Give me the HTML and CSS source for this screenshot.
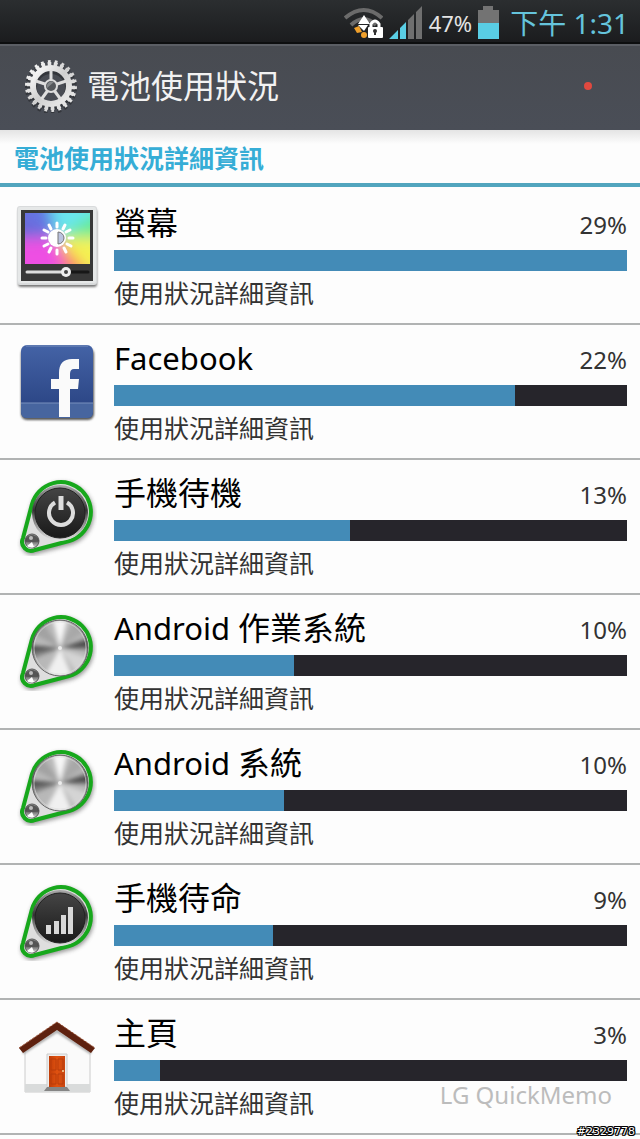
FILE: index.html
```html
<!DOCTYPE html>
<html lang="zh-Hant">
<head>
<meta charset="utf-8">
<meta name="viewport" content="width=device-width, initial-scale=1">
<title>電池使用狀況</title>
<link rel="stylesheet" href="styles.css">
</head>
<body>
<svg class="defs" width="0" height="0" aria-hidden="true">
  <defs>
    <linearGradient id="silver" x1="0" y1="0" x2="1" y2="1"><stop offset="0" stop-color="#fff"/><stop offset=".5" stop-color="#cfcfcf"/><stop offset="1" stop-color="#eee"/></linearGradient>
    <linearGradient id="rim" x1="0" y1="0" x2="0" y2="1"><stop offset="0" stop-color="#aaa"/><stop offset=".45" stop-color="#333"/><stop offset=".6" stop-color="#777"/><stop offset="1" stop-color="#e4e4e4"/></linearGradient>
    <linearGradient id="black" x1="0" y1="0" x2="0" y2="1"><stop offset="0" stop-color="#454545"/><stop offset="1" stop-color="#191919"/></linearGradient>
    <linearGradient id="fb" x1="0" y1="0" x2="0" y2="1"><stop offset="0" stop-color="#4463a6"/><stop offset="1" stop-color="#27407f"/></linearGradient>
    <linearGradient id="door" x1="0" y1="0" x2="1" y2="0"><stop offset="0" stop-color="#c03c08"/><stop offset=".5" stop-color="#e05210"/><stop offset="1" stop-color="#c84510"/></linearGradient>
    <filter id="blur1"><feGaussianBlur stdDeviation="1"/></filter>
    <filter id="blur2"><feGaussianBlur stdDeviation="2"/></filter>
    <filter id="blur8" x="-50%" y="-50%" width="200%" height="200%"><feGaussianBlur stdDeviation="7"/></filter>
    <clipPath id="disc"><circle cx="43" cy="37" r="27"/></clipPath>
    <clipPath id="picture"><rect x="8" y="7" width="65" height="51"/></clipPath>
    <symbol id="case" viewBox="0 0 80 80">
      <path d="M15 28A30 30 0 1 1 52 65L18 74A9 9 0 0 1 6 62Z" transform="translate(1 2)" fill="#555" stroke="#555" stroke-width="4" filter="url(#blur2)" opacity=".6"/>
      <path d="M15 28A30 30 0 1 1 52 65L18 74A9 9 0 0 1 6 62Z" fill="#dedede" stroke="#17a81c" stroke-width="4"/>
      <circle cx="15" cy="65" r="7" fill="url(#rim)" stroke="#555"/>
      <path d="M9 65A6 6 0 0 1 21 65L15 66Z" fill="#555"/><path d="M15 66L10 70A7 7 0 0 0 17 71Z" fill="#fff"/><circle cx="14" cy="62" r="2" fill="#bbb"/>
      <circle cx="43" cy="37" r="28" fill="url(#rim)"/>
    </symbol>
    <symbol id="metal" viewBox="0 0 80 80">
      <g clip-path="url(#disc)">
        <circle cx="43" cy="37" r="28" fill="#b8b8b8"/>
        <g filter="url(#blur2)">
          <path d="M43 37L10 35V50Z" fill="#808080"/><path d="M43 37L10 42V34Z" fill="#505050"/>
          <path d="M43 37L76 24V39Z" fill="#808080"/><path d="M43 37L76 28V36Z" fill="#444"/>
          <path d="M43 37L34 2H52Z" fill="#f6f6f6"/><path d="M43 37L8 18 22 6Z" fill="#a2a2a2"/>
          <path d="M43 37L60 4 73 17Z" fill="#a8a8a8"/><path d="M43 37L24 72H58Z" fill="#f0f0f0"/><path d="M43 37L76 49 65 70Z" fill="#d4d4d4"/>
        </g>
        <circle cx="43" cy="37" r="2" fill="#fff" opacity=".7"/>
      </g>
      <circle cx="43" cy="37" r="26" fill="none" stroke="#ddd" opacity=".6"/><circle cx="43" cy="37" r="28" fill="none" stroke="#666"/>
    </symbol>
  </defs>
</svg>

<div class="status">
  <svg width="39" height="34" viewBox="0 0 39 34" role="img" aria-label="Wi-Fi">
    <g fill="none" stroke="#6b6b6b" stroke-width="4"><path d="M1 12Q20-4 38 12"/><path d="M7 19Q20 7 32 19"/></g>
    <path d="M14 18L20 9 26 18Z" fill="#fff"/><path d="M14 19H24L20 25Z" fill="#fff"/>
    <path d="M10 22L15 20 18 26 13 27Z" fill="#f0a02b"/><circle cx="20" cy="29" r="3" fill="#f0a02b"/>
    <path d="M27 22V18Q31 12 35 18V22" fill="none" stroke="#fff" stroke-width="3"/><rect x="24" y="21" width="15" height="11" rx="1" fill="#fff"/><path d="M31 24v5" stroke="#333" stroke-width="2"/><circle cx="31" cy="25" r="2" fill="#333"/>
  </svg>
  <svg width="34" height="34" viewBox="0 0 34 34" role="img" aria-label="訊號"><path d="M0 33L9 24V33ZM11 22L17 16V33H11Z" fill="#59cde4"/><path d="M19 14L25 8V33H19ZM27 6L33 0V33H27Z" fill="#6f6f6f"/></svg>
  <span class="charge">47%</span>
  <svg width="21" height="34" viewBox="0 0 21 34" role="img" aria-label="電池"><path d="M0 4H5V0H15V4H21V17H0Z" fill="#737373"/><path d="M0 17H21V33H0Z" fill="#59cde4"/></svg>
  <time class="clock">下午 1:31</time>
</div>

<header class="bar">
  <svg class="gear" width="54" height="54" viewBox="0 0 54 54" aria-hidden="true">
    <g fill="none" stroke="#26282c" opacity=".6" transform="translate(0 2)"><circle cx="27" cy="27" r="18" stroke-width="8"/><circle cx="27" cy="27" r="23" stroke-width="6" pathLength="44" stroke-dasharray="1 1"/></g>
    <g fill="none" stroke="url(#silver)"><circle cx="27" cy="27" r="18" stroke-width="6"/><circle cx="27" cy="27" r="22" stroke-width="4" pathLength="44" stroke-dasharray="1.2 .8" stroke-dashoffset=".1"/><circle cx="27" cy="27" r="24" stroke-width="4" pathLength="44" stroke-dasharray=".8 1.2" stroke-dashoffset="-.1"/></g>
    <path d="M27 27V11M27 27L11.800 22M27 27L42.200 22M27 27L17.600 40M27 27L36.400 40" stroke="#dedede" stroke-width="3"/>
    <circle cx="27" cy="27" r="7" fill="#ddd"/><circle cx="27" cy="27" r="5" fill="#55585c"/><path d="M23 29A5 5 0 0 1 30 23Z" fill="#85888b"/>
  </svg>
  <h1 class="heading">電池使用狀況</h1>
  <span class="dot"></span>
</header>

<main class="content">
  <h2 class="section">電池使用狀況詳細資訊</h2>
  <ul class="list">
    <li class="row">
      <svg class="icon" viewBox="0 0 80 80" aria-hidden="true">
        <rect x="1" y="3" width="79" height="78" rx="3" fill="#777" filter="url(#blur1)"/>
        <rect x="0" y="0" width="80" height="79" rx="3" fill="#d9dbdc"/><rect x="1" y="1" width="78" height="76" rx="2" fill="#e6e8e8"/>
        <rect x="4" y="4" width="72" height="71" fill="#383838"/>
        <g clip-path="url(#picture)"><rect x="8" y="7" width="65" height="51" fill="#e4e8f8"/>
          <g filter="url(#blur8)" opacity=".85"><path d="M40 32L-10-10H38Z" fill="#4c63e0"/><path d="M40 32L-10-10V36Z" fill="#5554d8"/><path d="M40 32L30-15H90V4Z" fill="#55e5ee"/><path d="M40 32L90 0V38Z" fill="#50ec80"/><path d="M40 32L90 32V72H70Z" fill="#f8f436"/><path d="M40 32L78 74H38Z" fill="#ff6b49"/><path d="M40 32L48 76H-10V34Z" fill="#f035e0"/></g>
        </g>
        <g stroke="#fff" stroke-width="3" stroke-linecap="round"><path d="M40 17v4M40 44v4M25 32h4M52 32h4M32 19l2 4M47 42l2 4M27 24l4 2M50 38l4 2M48 19l-2 4M34 42l-2 4M53 24l-4 2M31 38l-4 2"/></g>
        <circle cx="40" cy="32" r="9" fill="#fff"/><path d="M41 26A6 6 0 0 1 41 38Z" fill="#bbc3df" stroke="#777" stroke-width="1"/>
        <path d="M48 66H71" stroke="#171717" stroke-width="3" stroke-linecap="round"/><path d="M10 66H46" stroke="#ddd" stroke-width="3" stroke-linecap="round"/>
        <circle cx="49" cy="66" r="5" fill="#eee"/><circle cx="49" cy="66" r="2" fill="#444"/>
      </svg>
      <div class="info"><div class="line"><h3 class="name">螢幕</h3><span class="percent">29%</span></div><div class="track"><div class="fill" style="width:100%"></div></div><p class="detail">使用狀況詳細資訊</p></div>
    </li>
    <li class="row">
      <svg class="icon" viewBox="0 0 80 80" aria-hidden="true">
        <rect x="4" y="7" width="73" height="72" rx="6" fill="#555" filter="url(#blur1)"/><rect x="4" y="4" width="72" height="73" rx="6" fill="url(#fb)"/>
        <path d="M4 62H76V71Q76 77 70 77H10Q4 77 4 71Z" fill="#47659f"/><path d="M4 62H76" stroke="#7890bd"/><path d="M9 5H71" stroke="#7890bd"/>
        <path d="M42 76V48H34V38H42V32Q42 18 55 18H62V28H57Q53 28 53 33V38H62L61 48H53V76Z" fill="#fafafa"/>
      </svg>
      <div class="info"><div class="line"><h3 class="name"><span class="latin">Facebook</span></h3><span class="percent">22%</span></div><div class="track"><div class="fill" style="width:78.1%"></div></div><p class="detail">使用狀況詳細資訊</p></div>
    </li>
    <li class="row">
      <svg class="icon" viewBox="0 0 80 80" aria-hidden="true"><use href="#case"/><circle cx="43" cy="37" r="25" fill="url(#black)" stroke="#222"/><path d="M38 26.500A12 12 0 1 0 50 26.500" fill="none" stroke="#ddd" stroke-width="4"/><path d="M44 20V34" stroke="#ddd" stroke-width="5"/></svg>
      <div class="info"><div class="line"><h3 class="name">手機待機</h3><span class="percent">13%</span></div><div class="track"><div class="fill" style="width:46%"></div></div><p class="detail">使用狀況詳細資訊</p></div>
    </li>
    <li class="row">
      <svg class="icon" viewBox="0 0 80 80" aria-hidden="true"><use href="#case"/><use href="#metal"/></svg>
      <div class="info"><div class="line"><h3 class="name"><span class="latin">Android </span>作業系統</h3><span class="percent">10%</span></div><div class="track"><div class="fill" style="width:35.1%"></div></div><p class="detail">使用狀況詳細資訊</p></div>
    </li>
    <li class="row">
      <svg class="icon" viewBox="0 0 80 80" aria-hidden="true"><use href="#case"/><use href="#metal"/></svg>
      <div class="info"><div class="line"><h3 class="name"><span class="latin">Android </span>系統</h3><span class="percent">10%</span></div><div class="track"><div class="fill" style="width:33.1%"></div></div><p class="detail">使用狀況詳細資訊</p></div>
    </li>
    <li class="row">
      <svg class="icon" viewBox="0 0 80 80" aria-hidden="true"><use href="#case"/><circle cx="43" cy="37" r="25" fill="url(#black)" stroke="#222"/><path d="M29 44h5v9h-5zM37 40h5v13h-5zM44 34h5v19h-5zM51 26h5v27h-5z" fill="#d8d8d8"/></svg>
      <div class="info"><div class="line"><h3 class="name">手機待命</h3><span class="percent">9%</span></div><div class="track"><div class="fill" style="width:31%"></div></div><p class="detail">使用狀況詳細資訊</p></div>
    </li>
    <li class="row">
      <svg class="icon" viewBox="0 0 80 80" aria-hidden="true">
        <path d="M8 31L40 9 73 31V76H8Z" fill="#fafafa" stroke="#ccc"/><path d="M8 68H73V76H8Z" fill="#d9dbdb"/>
        <path d="M6 37L40 15 74 37" fill="none" stroke="#aaa" stroke-width="3" filter="url(#blur1)"/>
        <path d="M2 32L40 6 78 32 74 37 40 14 6 37Z" fill="#5e210f"/><path d="M2 32L40 6 78 32" fill="none" stroke="#9a5439" stroke-width="1" stroke-dasharray="3 1"/>
        <path d="M30 70V38H50V70" fill="#eee" stroke="#ccc"/><rect x="32" y="40" width="16" height="31" fill="url(#door)"/><path d="M34 43h5v11h-5zM41 43h5v11h-5zM34 58h5v10h-5zM41 58h5v10h-5z" fill="none" stroke="#b93c0a"/><circle cx="46" cy="55" r="1" fill="#f6d8a0"/>
        <path d="M30 71H50L53 75H27Z" fill="#858585"/>
      </svg>
      <div class="info"><div class="line"><h3 class="name">主頁</h3><span class="percent">3%</span></div><div class="track"><div class="fill" style="width:9%"></div></div><p class="detail">使用狀況詳細資訊</p></div>
    </li>
  </ul>
  <span class="memo">LG QuickMemo</span>
  <span class="serial">#2329778</span>
</main>
</body>
</html>
```
FILE: styles.css
```css
* { box-sizing: border-box; }

body {
  margin: 0;
  min-height: 100vh;
  display: flex;
  flex-direction: column;
  background: #fdfdfd;
  color: #000;
  font-family: "Noto Sans", "Noto Sans CJK TC", sans-serif;
}

h1, h2, h3, p, ul { margin: 0; padding: 0; font-weight: 400; }

.defs { position: absolute; }

.status {
  height: 44px;
  padding: 3px 11px 0 8px;
  display: flex;
  align-items: center;
  justify-content: flex-end;
  gap: 6px;
  background: linear-gradient(#2b2e30, #1b1c1e);
  border-bottom: 2px solid #0d0e0f;
}

.charge { color: #e4e4e4; font-size: 22px; line-height: 34px; }

.clock { margin-left: 5px; color: #65c4dc; font-size: 28px; line-height: 40px; }

.bar {
  height: 86px;
  padding: 0 48px 4px 24px;
  display: flex;
  align-items: center;
  gap: 9px;
  background: linear-gradient(#484b51, #4a4e57);
  border-top: 2px solid #5b5e64;
}

.heading { flex: 1; color: #f2f2f2; font-size: 32px; line-height: 48px; }

.dot { width: 8px; height: 8px; border-radius: 50%; background: #e0493f; }

.content { position: relative; flex: 1; padding-bottom: 4px; }

.section {
  padding: 10px 14px 7px;
  color: #36add6;
  font-size: 25px;
  font-weight: 700;
  line-height: 36px;
  background: linear-gradient(#e4e4e4, #fdfdfd 14px);
  border-bottom: 4px solid #52a5be;
}

.list { padding-top: 3px; list-style: none; }

.row {
  height: 135px;
  padding: 10px 13px 0 17px;
  display: flex;
  gap: 17px;
  border-bottom: 2px solid #b1b3b3;
}

.icon { flex: none; width: 80px; height: 80px; margin-top: 6px; overflow: visible; }

.info { flex: 1; min-width: 0; }

.line { height: 50px; display: flex; justify-content: space-between; }

.name { font-size: 32px; line-height: 46px; white-space: pre; }

.latin { font-size: 31px; }

.percent { padding-top: 9px; color: #333; font-size: 24px; line-height: 32px; }

.track { height: 21px; background: #26252b; }

.fill { height: 100%; background: #438bb7; }

.detail { padding-top: 4px; color: #333; font-size: 25px; line-height: 36px; }

.memo {
  position: absolute;
  right: 28px;
  bottom: 28px;
  color: #bcbcbc;
  font-size: 24px;
  line-height: 32px;
}

.serial {
  position: absolute;
  right: 5px;
  bottom: 0;
  color: #fff;
  font-family: "DejaVu Sans", sans-serif;
  font-size: 11px;
  line-height: 14px;
  text-shadow: 1px 0 #000, -1px 0 #000, 0 1px #000, 0 -1px #000, 1px 1px #000, -1px -1px #000, 1px -1px #000, -1px 1px #000;
}
```
